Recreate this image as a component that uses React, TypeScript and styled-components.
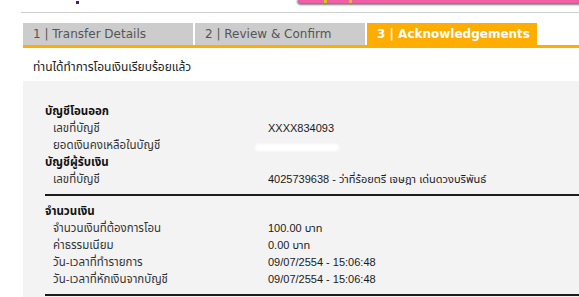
import React from 'react';
import styled, { createGlobalStyle } from 'styled-components';

const GlobalStyle = createGlobalStyle`
  html, body {
    margin: 0;
    padding: 0;
    background: #ffffff;
    overflow: hidden;
  }
  body {
    font-family: 'Liberation Sans', 'Noto Sans Thai', 'Noto Sans', sans-serif;
  }
`;

const tabs = ['1 | Transfer Details', '2 | Review & Confirm', '3 | Acknowledgements'];

const sections = [
  {
    title: 'บัญชีโอนออก',
    rows: [
      { label: 'เลขที่บัญชี', value: 'XXXX834093' },
      { label: 'ยอดเงินคงเหลือในบัญชี', value: '', hidden: true },
    ],
  },
  {
    title: 'บัญชีผู้รับเงิน',
    rows: [{ label: 'เลขที่บัญชี', value: '4025739638 - ว่าที่ร้อยตรี เจษฎา เด่นดวงบริพันธ์' }],
  },
  {
    title: 'จำนวนเงิน',
    rows: [
      { label: 'จำนวนเงินที่ต้องการโอน', value: '100.00 บาท' },
      { label: 'ค่าธรรมเนียม', value: '0.00 บาท' },
      { label: 'วัน-เวลาที่ทำรายการ', value: '09/07/2554 - 15:06:48' },
      { label: 'วัน-เวลาที่หักเงินจากบัญชี', value: '09/07/2554 - 15:06:48' },
    ],
    divided: true,
  },
];

export default function App() {
  return (
    <>
      <GlobalStyle />
      <Page>
        <Header>
          <Dot />
          <Banner>
            <Stud />
            <Stud />
          </Banner>
        </Header>

        <TabBar>
          {tabs.map((t, i) => (
            <Tab key={t} active={i === 2}>
              {t}
            </Tab>
          ))}
        </TabBar>

        <Message>ท่านได้ทำการโอนเงินเรียบร้อยแล้ว</Message>

        <Panel>
          {sections.map((s) => (
            <Section key={s.title} divided={!!s.divided}>
              <Heading>{s.title}</Heading>
              {s.rows.map((r, i) => (
                <Row key={i}>
                  <Label>{r.label}</Label>
                  {r.hidden ? <Smudge /> : <Value>{r.value}</Value>}
                </Row>
              ))}
            </Section>
          ))}
          <Rule />
        </Panel>
      </Page>
    </>
  );
}

const Page = styled.div`
  width: 579px;
  height: 297px;
  overflow: hidden;
`;

const Header = styled.div`
  position: relative;
  height: 12px;
  margin-left: 21px;
  border-bottom: 1px solid #cfcfcf;
`;

const Dot = styled.span`
  position: absolute;
  left: 55px;
  top: 1px;
  width: 3px;
  height: 3px;
  background: #4a1a7a;
`;

const Banner = styled.div`
  position: absolute;
  left: 277px;
  right: 0;
  top: 0;
  height: 3px;
  background: #ee5fa8;
  box-shadow: 0 1px 2px 1px rgba(40, 40, 40, 0.6);
  border-radius: 0 0 0 3px;
  display: flex;
  gap: 22px;
  padding-left: 26px;
`;

const Stud = styled.span`
  width: 3px;
  height: 3px;
  background: #d8c21a;
`;

const TabBar = styled.div`
  display: flex;
  gap: 2px;
  margin: 10px 0 0 23px;
  border-bottom: 3px solid #ffad00;
`;

const Tab = styled.div<{ active: boolean }>`
  width: 170px;
  height: 22px;
  box-sizing: border-box;
  padding: 3px 0 0 10px;
  background: ${(p) => (p.active ? '#ffad00' : '#cccccc')};
  color: ${(p) => (p.active ? '#ffffff' : '#555555')};
  font-family: 'DejaVu Sans', Verdana, sans-serif;
  font-size: 12px;
  font-weight: ${(p) => (p.active ? 'bold' : 'normal')};
  line-height: 17px;
`;

const Message = styled.div`
  height: 33px;
  box-sizing: border-box;
  padding: 11px 0 0 33px;
  font-size: 12px;
  line-height: 16px;
  color: #222;
`;

const Panel = styled.div`
  margin-left: 23px;
  background: #f3f3f3;
  padding: 22px 0 0 22px;
  height: 220px;
`;

const Section = styled.div<{ divided: boolean }>`
  ${(p) =>
    p.divided &&
    `
    border-top: 2px solid #1c1c1c;
    margin-top: 6px;
    padding-top: 7px;
  `}
`;

const Heading = styled.div`
  font-size: 11.5px;
  font-weight: bold;
  line-height: 17px;
  color: #111;
`;

const Row = styled.div`
  display: grid;
  grid-template-columns: 215px 1fr;
  height: 17px;
  line-height: 17px;
  padding-left: 8px;
`;

const Label = styled.span`
  font-size: 11.5px;
  color: #333;
`;

const Value = styled.span`
  font-size: 11px;
  color: #1a1a1a;
`;

const Smudge = styled.span`
  width: 84px;
  height: 7px;
  margin: 7px 0 0 -13px;
  background: #ffffff;
  border-radius: 4px;
  filter: blur(1px);
`;

const Rule = styled.div`
  border-top: 2px solid #1c1c1c;
  margin-top: 6px;
`;
